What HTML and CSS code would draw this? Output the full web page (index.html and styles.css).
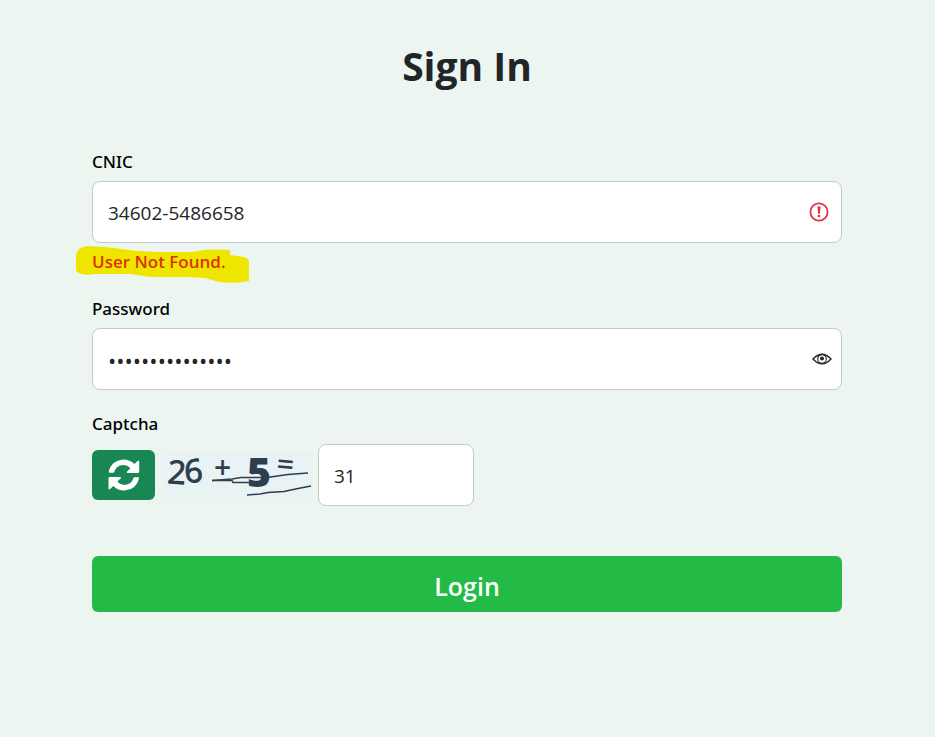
FILE: index.html
```html
<!DOCTYPE html>
<html lang="en">
<head>
    <meta charset="UTF-8">
    <meta name="viewport" content="width=device-width, initial-scale=1.0">
    <title>Sign In</title>
    <link rel="stylesheet" href="styles.css">
</head>
<body>
    <main class="login-page">
        <h1 class="login-title">Sign In</h1>
        <form class="login-form">
            <div class="form-group">
                <label for="cnic">CNIC</label>
                <div class="input-wrap">
                    <input type="text" id="cnic" class="form-control" value="34602-5486658" aria-describedby="cnic-error">
                    <svg class="error-icon" width="20" height="20" viewBox="0 0 20 20" fill="none" stroke="#dc3545" aria-hidden="true">
                        <circle cx="10" cy="10" r="8.6" stroke-width="1.8"/>
                        <path d="M8.4 4.500h3.200l-.7 7.200H9.100z" fill="#dc3545" stroke="none"/>
                        <circle cx="10" cy="14" r="1.3" fill="#dc3545" stroke="none"/>
                    </svg>
                </div>
                <p class="error-message" id="cnic-error">
                    <svg class="highlight" width="174" height="38" viewBox="0 0 174 38" aria-hidden="true">
                        <path fill="#efe600" d="M0 9Q1 1 12 0L29 1L62 5L84 6H116L128 4Q142 3 154 4V9L168 11Q173 13 173 16V35Q160 38 143 36L129 32L114 31H74L55 28H20Q8 30 3 27Q0 26 0 23Z"/>
                    </svg>
                    <span>User Not Found.</span>
                </p>
            </div>
            <div class="form-group">
                <label for="password">Password</label>
                <div class="input-wrap">
                    <input type="password" id="password" class="form-control" value="abcdefgh1234567">
                    <button type="button" class="toggle-password" aria-label="Show password">
                        <svg width="20" height="12" viewBox="0 0 20 12" fill="none" stroke="#212529">
                            <path d="M1 6Q10-3.6 19 6Q10 15.6 1 6Z" stroke-width="1.4"/>
                            <circle cx="10" cy="6" r="4.300" stroke-width="1.1"/>
                            <circle cx="10" cy="5.6" r="2" fill="#212529" stroke="none"/>
                        </svg>
                    </button>
                </div>
            </div>
            <div class="form-group">
                <label for="captcha">Captcha</label>
                <div class="captcha-row">
                    <button type="button" class="refresh-button" aria-label="Refresh captcha">
                        <svg width="32" height="32" viewBox="0 0 32 32" fill="#ffffff">
                            <path d="M31.2 2.2v10.6q0 1.2-1.2 1.2H19.600q-1.600-.2-.5-1.500l3.200-3.100Q19.200 6 15 6.100 8.200 6.600 6.200 13q-.2.700-.9.700H1.400q-1-.1-.7-1.100Q3.300 1.500 15 .5q6.700-.1 11.400 4.600l3.200-3.100q1.400-.9 1.600.2z"/>
                            <path d="M.5 29.800V19.200Q.5 18 1.700 18h10.400q1.600.2.500 1.500l-3.200 3.100Q12.500 26 16.700 25.900q6.800-.5 8.800-6.900.2-.7.900-.7h3.900q1 .1.700 1.100-2.600 11.100-14.300 12.100-6.700.1-11.400-4.600L2.100 30Q.7 30.900.5 29.800z"/>
                        </svg>
                    </button>
                    <svg class="captcha-image" width="151" height="46" viewBox="0 0 151 46" role="img" aria-label="Captcha">
                        <rect width="151" height="46" fill="#eaf3f3"/>
                        <g class="captcha-text">
                            <text x="6" y="31" font-size="32" rotate="4 -5" stroke="#2c3e50" stroke-width="1">26</text>
                            <text x="53" y="26" font-size="30" font-weight="600">+</text>
                            <text x="86" y="35" font-size="41" font-weight="800">5</text>
                            <text x="115" y="22" font-size="30" font-weight="600" rotate="5">=</text>
                        </g>
                        <g fill="none" stroke="#2c3e50">
                            <path d="M51 28.500L71 27L80 25.500L106 25.500L127 22.500L147 21" stroke-width="1.500"/>
                            <path d="M51 28.500H71L72 30.500H89" stroke-width="1.500"/>
                            <path d="M86 43L99 42L107 40.500L123 39.500L137 36.500L150 34" stroke-width="1.500"/>
                        </g>
                    </svg>
                    <input type="text" id="captcha" class="form-control captcha-input" value="31">
                </div>
            </div>
            <button type="submit" class="login-button">Login</button>
        </form>
    </main>
</body>
</html>
```

FILE: styles.css
```css
* {
    box-sizing: border-box;
}

body {
    margin: 0;
    font-family: "Segoe UI", "Open Sans", "Noto Sans", sans-serif;
    background-color: #ecf5f0;
    color: #212529;
}

.login-page {
    padding: 40px 93px 40px 92px;
}

.login-title {
    margin: 0 0 56px;
    font-size: 39px;
    line-height: 52px;
    font-weight: 700;
    text-align: center;
}

.form-group {
    margin-bottom: 20px;
}

label {
    display: block;
    margin-bottom: 6px;
    font-family: "Segoe UI", "Noto Sans", "Open Sans", sans-serif;
    font-size: 17px;
    line-height: 27px;
    font-weight: 500;
    color: #000000;
}

.input-wrap {
    position: relative;
}

.form-control {
    display: block;
    width: 100%;
    height: 62px;
    padding: 2px 15px 0;
    border: 1px solid #c5c9c8;
    border-radius: 8px;
    background-color: #ffffff;
    font-family: inherit;
    font-size: 19px;
    color: #212529;
    outline: none;
}

.form-control[type="password"] {
    font-size: 22px;
}

.error-icon {
    position: absolute;
    top: 21px;
    right: 13px;
}

.error-message {
    position: relative;
    margin: 6px 0 0;
    font-size: 17px;
    line-height: 26px;
    font-weight: 600;
    color: #dc3206;
}

.error-message span {
    position: relative;
}

.highlight {
    position: absolute;
    top: -3px;
    left: -16px;
}

.toggle-password {
    position: absolute;
    top: 25px;
    right: 10px;
    display: flex;
    padding: 0;
    border: none;
    background: none;
    cursor: pointer;
}

.captcha-row {
    display: flex;
    align-items: center;
    gap: 6px;
    padding-top: 1px;
}

.refresh-button {
    display: flex;
    justify-content: center;
    align-items: center;
    width: 63px;
    height: 50px;
    padding: 0;
    border: none;
    border-radius: 6px;
    background-color: #198754;
    cursor: pointer;
}

.captcha-image {
    overflow: visible;
}

.captcha-text {
    font-family: "Open Sans", "Noto Sans", sans-serif;
    fill: #2c3e50;
}

.captcha-input {
    width: 156px;
}

.login-button {
    width: 100%;
    height: 56px;
    margin-top: 30px;
    padding: 3px 0 0;
    border: none;
    border-radius: 6px;
    background-color: #23bb45;
    font-family: inherit;
    font-size: 25px;
    font-weight: 600;
    color: #ffffff;
    cursor: pointer;
}
```
